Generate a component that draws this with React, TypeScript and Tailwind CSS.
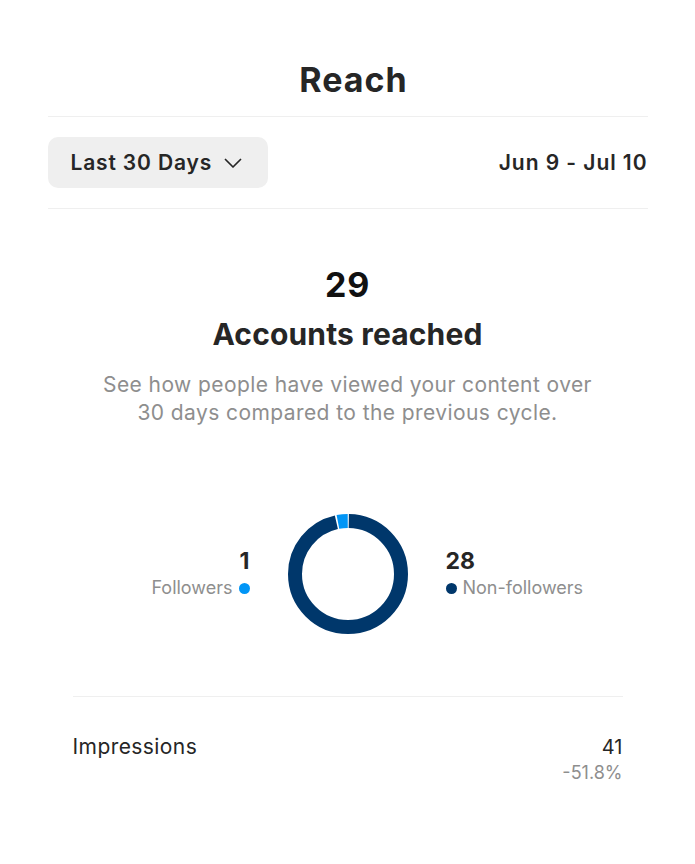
import React from "react";

const font = { fontFamily: "Inter, 'Noto Sans', sans-serif" };

function Donut() {
  const r = 53;
  const c = 2 * Math.PI * r;
  const blue = c / 29;
  const gap = 1.6;
  return (
    <svg width="120" height="120" viewBox="0 0 120 120" className="shrink-0">
      <g transform="rotate(-90 60 60)">
        <circle
          cx="60"
          cy="60"
          r={r}
          fill="none"
          stroke="#00376b"
          strokeWidth="14"
          strokeDasharray={`${c - blue - gap} ${c}`}
          strokeDashoffset={-gap / 2}
        />
        <circle
          cx="60"
          cy="60"
          r={r}
          fill="none"
          stroke="#0095f6"
          strokeWidth="14"
          strokeDasharray={`${blue - gap} ${c}`}
          strokeDashoffset={-(c - blue + gap / 2)}
        />
      </g>
    </svg>
  );
}

export default function App() {
  return (
    <div className="min-h-screen bg-white text-[#262626]" style={font}>
      <div className="mx-auto w-[600px]">
        <h1 className="pt-[60px] pb-4 pl-[12px] text-center text-[34px] font-bold leading-[40px] tracking-[0.03em] border-b border-[#efefef]">
          Reach
        </h1>

        <div className="flex items-center justify-between py-5 border-b border-[#efefef]">
          <button className="flex h-[51px] w-[220px] items-center gap-[12px] rounded-[10px] bg-[#efefef] pl-[23px] text-[21px] font-semibold tracking-[0.04em]">
            Last 30 Days
            <svg width="18" height="10" viewBox="0 0 18 10" fill="none" stroke="#262626" strokeWidth="1.7" strokeLinecap="round" strokeLinejoin="round">
              <path d="M1.5 1.5l7.5 7.5 7.5-7.5" />
            </svg>
          </button>
          <span className="text-[21px] font-semibold tracking-[0.045em]">Jun 9 - Jul 10</span>
        </div>

        <div className="flex flex-col items-center pt-[56px] text-center">
          <p className="text-[34px] font-bold leading-[40px] tracking-[0.02em] text-[#111]">29</p>
          <p className="mt-[11px] text-[30px] font-bold leading-[36px] tracking-[0.005em]">Accounts reached</p>
          <p className="mt-[19px] w-[540px] text-[21px] leading-[28px] tracking-[0.02em] text-[#8e8e8e]">
            See how people have viewed your content over
            <br />
            30 days compared to the previous cycle.
          </p>
        </div>

        <div className="mt-[87px] flex items-center justify-center gap-[38px]">
          <div className="flex w-[150px] flex-col items-end">
            <span className="text-[23px] font-bold leading-[28px]">1</span>
            <span className="flex items-center gap-[6px] text-[18px] leading-[26px] text-[#8e8e8e]">
              Followers
              <span className="h-[11px] w-[11px] rounded-full bg-[#0095f6]" />
            </span>
          </div>
          <Donut />
          <div className="flex w-[150px] flex-col items-start">
            <span className="text-[23px] font-bold leading-[28px]">28</span>
            <span className="flex items-center gap-[6px] text-[18px] leading-[26px] text-[#8e8e8e]">
              <span className="h-[11px] w-[11px] rounded-full bg-[#00376b]" />
              Non-followers
            </span>
          </div>
        </div>

        <div className="mx-[25px] mt-[62px] border-t border-[#efefef] pt-[36px]">
          <div className="flex items-start justify-between">
            <span className="text-[21px] leading-[28px] tracking-[0.02em]">Impressions</span>
            <div className="flex flex-col items-end">
              <span className="text-[20px] leading-[28px]">41</span>
              <span className="text-[18px] leading-[24px] text-[#8e8e8e]">-51.8%</span>
            </div>
          </div>
        </div>
      </div>
    </div>
  );
}
